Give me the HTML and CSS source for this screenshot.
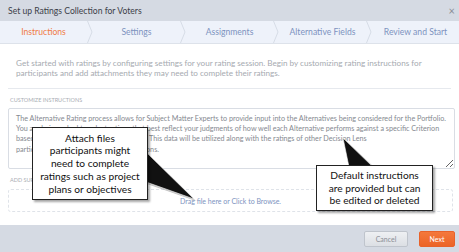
FILE: index.html
```html
<!DOCTYPE html>
<html lang="en">
<head>
<meta charset="utf-8">
<title>Set up Ratings Collection for Voters</title>
<link rel="stylesheet" href="styles.css">
</head>
<body>
<div class="dialog">
  <div class="head">
    <span class="head-title">Set up Ratings Collection for Voters</span>
    <span class="close">&times;</span>
  </div>
  <div class="tabs">
    <div class="tab active">Instructions</div>
    <svg class="chev" width="6" height="22" viewBox="0 0 6 22"><polyline points="0.5,0 5,11 0.5,22" fill="none" stroke="#d6dce6" stroke-width="1"/></svg>
    <div class="tab">Settings</div>
    <svg class="chev" width="6" height="22" viewBox="0 0 6 22"><polyline points="0.5,0 5,11 0.5,22" fill="none" stroke="#d6dce6" stroke-width="1"/></svg>
    <div class="tab">Assignments</div>
    <svg class="chev" width="6" height="22" viewBox="0 0 6 22"><polyline points="0.5,0 5,11 0.5,22" fill="none" stroke="#d6dce6" stroke-width="1"/></svg>
    <div class="tab">Alternative Fields</div>
    <svg class="chev" width="6" height="22" viewBox="0 0 6 22"><polyline points="0.5,0 5,11 0.5,22" fill="none" stroke="#d6dce6" stroke-width="1"/></svg>
    <div class="tab">Review and Start</div>
  </div>
  <div class="body">
    <p class="intro">Get started with ratings by configuring settings for your rating session. Begin by customizing rating instructions for<br>participants and add attachments they may need to complete their ratings.</p>
    <hr class="rule">
    <div class="label">Customize Instructions</div>
    <textarea class="instr" readonly>The Alternative Rating process allows for Subject Matter Experts to provide input into the Alternatives being considered for the Portfolio.
You are being asked to select ratings that best reflect your judgments of how well each Alternative performs against a specific Criterion
based on input from the Portfolio owners. This data will be utilized along with the ratings of other Decision Lens
participants to inform prioritization decisions.</textarea>
    <div class="label label-add">Add Supporting Files</div>
    <div class="drop">Drag file here or Click to Browse.</div>
  </div>
  <div class="foot">
    <button class="btn btn-cancel">Cancel</button>
    <button class="btn btn-next">Next</button>
  </div>

  <svg class="pointers" width="459" height="252" viewBox="0 0 459 252">
    <polygon points="147,154 147,184 196,201" fill="#9a9a9a" opacity="0.6"/>
    <polygon points="146,152 146,182 194,199" fill="#111" stroke="#fff" stroke-width="0.6"/>
    <polygon points="351,168 375,168 345,140" fill="#9a9a9a" opacity="0.6"/>
    <polygon points="349,167 373,167 343,138" fill="#111" stroke="#fff" stroke-width="0.6"/>
  </svg>
  <div class="callout callout-files">Attach files participants might need to complete ratings such as project plans or objectives</div>
  <div class="callout callout-default">Default instructions are provided but can be edited or deleted</div>
</div>
</body>
</html>
```
FILE: styles.css
```css
body {
margin: 0;
font-family: Lato, "Liberation Sans", sans-serif;
}
.dialog {
position: relative;
width: 459px;
height: 252px;
display: flex;
flex-direction: column;
background: #fff;
overflow: hidden;
}
.head {
height: 21px;
flex: none;
background: #d5dae3;
display: flex;
align-items: center;
justify-content: space-between;
padding: 0 4px 0 8px;
}
.head-title {
font-size: 8.6px;
color: #3c4048;
}
.close {
font-size: 11px;
color: #8a8e96;
line-height: 1;
}
.tabs {
height: 22px;
flex: none;
display: flex;
background: #eef2fa;
border-bottom: 1px solid #dde2ea;
}
.tab {
flex: 1;
display: flex;
align-items: center;
justify-content: center;
font-size: 8.6px;
color: #7d93bf;
}
.tab.active {
color: #f07b46;
}
.chev {
flex: none;
display: block;
}
.body {
flex: 1;
padding: 0 8px;
}
.intro {
margin: 14px 0 0 8px;
font-size: 8.15px;
line-height: 10px;
white-space: nowrap;
color: #a6aab0;
}
.rule {
margin: 10px 0 0;
border: 0;
border-top: 1px solid #e6e9ee;
}
.label {
margin: 7px 0 0 2px;
font-size: 5.5px;
line-height: 8px;
text-transform: uppercase;
color: #a9adb3;
}
.instr {
display: block;
box-sizing: border-box;
width: 447px;
height: 61px;
margin-top: 4px;
padding: 5px 2px 5px 7px;
border: 1px solid #d9dde4;
border-radius: 2px;
font-family: Lato, "Liberation Sans", sans-serif;
font-size: 7.2px;
line-height: 10.2px;
color: #858990;
resize: vertical;
overflow: hidden;
}
.label-add {
margin-top: 7px;
}
.drop {
box-sizing: border-box;
height: 23px;
width: 445px;
margin-top: 5px;
border: 1px dashed #dfe3e9;
border-radius: 3px;
display: flex;
align-items: center;
justify-content: center;
font-size: 7px;
color: #7d93c0;
}
.foot {
height: 27px;
flex: none;
background: #d5dae3;
display: flex;
align-items: center;
justify-content: flex-end;
gap: 11px;
padding: 0 4px 0 0;
}
.btn {
height: 16px;
font-family: Lato, "Liberation Sans", sans-serif;
font-size: 7px;
border-radius: 2px;
padding: 0;
}
.btn-cancel {
width: 44px;
color: #8a8e96;
border: 1px solid #bfc4cc;
background-image: linear-gradient(#eef0f3, #dcdfe4);
}
.btn-next {
width: 36px;
color: #fff;
border: 1px solid #e8622a;
background-image: linear-gradient(#f4783c, #ec6426);
}
.pointers {
position: absolute;
left: 0;
top: 0;
}
.callout {
position: absolute;
box-sizing: border-box;
background: #fff;
border: 1.3px solid #222;
box-shadow: 2px 2px 2px rgba(0,0,0,.35);
font-family: Lato, "Liberation Sans", sans-serif;
font-size: 10.2px;
line-height: 12.8px;
color: #111;
text-align: center;
display: flex;
align-items: center;
justify-content: center;
}
.callout-files {
left: 32px;
top: 127px;
width: 116px;
height: 73px;
padding: 0 6px;
}
.callout-default {
left: 316px;
top: 165px;
width: 117px;
height: 46px;
padding: 0 6px;
}
```
